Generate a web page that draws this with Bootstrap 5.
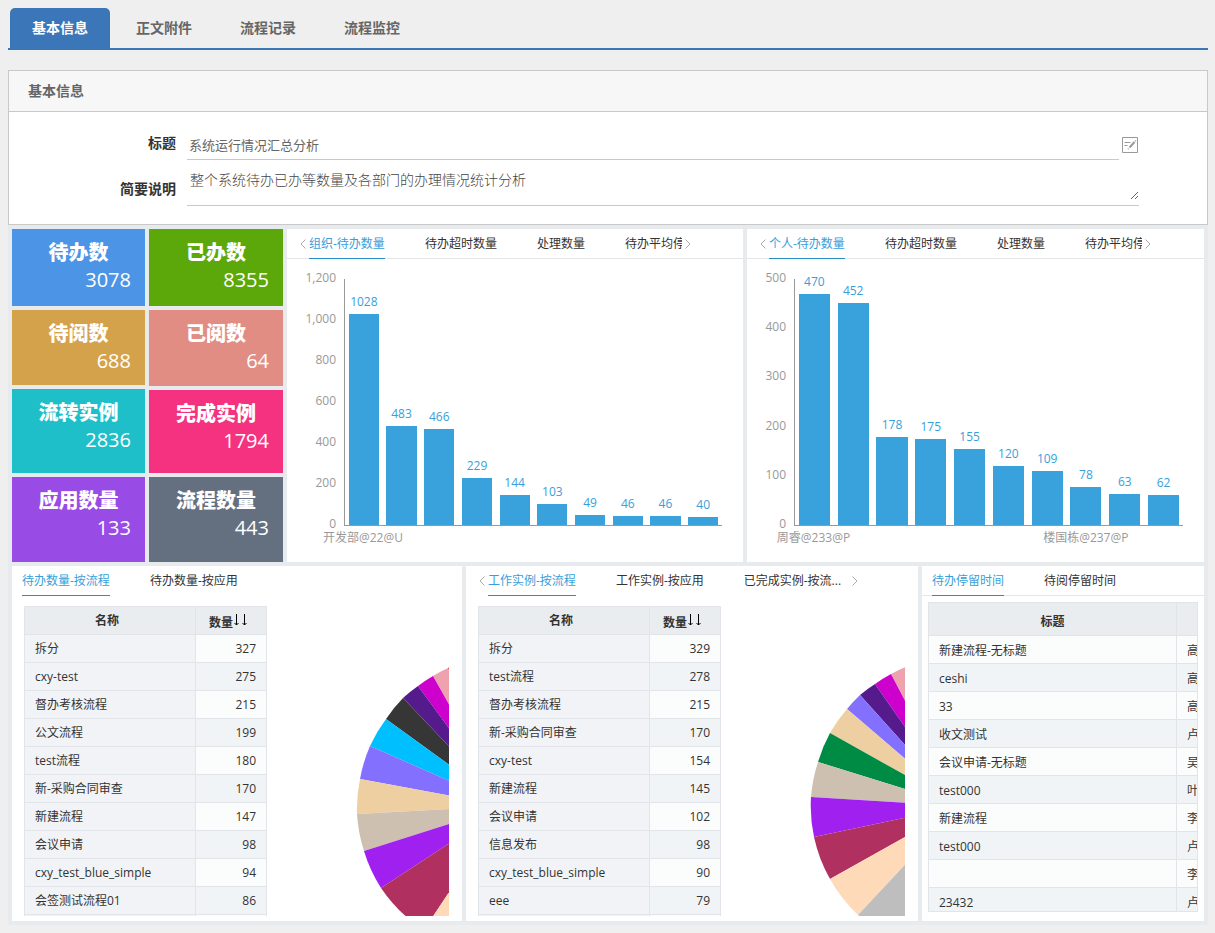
<!DOCTYPE html>
<html lang="zh-CN">
<head>
<meta charset="utf-8">
<meta name="viewport" content="width=device-width, initial-scale=1">
<title>系统运行情况汇总分析</title>
<link rel="stylesheet" href="https://cdn.jsdelivr.net/npm/bootstrap@5.3.0/dist/css/bootstrap.min.css">
<script src="https://cdn.jsdelivr.net/npm/bootstrap@5.3.0/dist/js/bootstrap.bundle.min.js"></script>
<style>
body { background: #efefef; padding: 8px 7px 8px 8px; font: 12px/16px "Open Sans", "Noto Sans CJK SC", sans-serif; color: #333; }
button { font: inherit; }
.nav-link { background: none; border: 0; }

/* page tabs */
.page-tabs { border-bottom: 2px solid #3b76b8; padding-left: 2px; gap: 4px; margin-bottom: 20px; }
.page-tabs .nav-link { width: 100px; height: 40px; padding: 0; border-radius: 5px 5px 0 0; font-size: 14px; font-weight: 700; color: #666; }
.page-tabs .nav-link.active { background: #3b76b8; color: #fff; }

/* form */
.info-card { border: 1px solid #c9c9c9; border-radius: 0; }
.info-card .card-header { height: 41px; padding: 0 19px; border-color: #c9c9c9; border-radius: 0; background: #f7f7f7; color: #666; font-size: 14px; line-height: 40px; font-weight: 700; }
.info-card .card-body { padding: 18px 68px 18px 0; display: grid; row-gap: 8px; }
.form-line { display: flex; gap: 11px; align-items: center; }
.form-line label { width: 167px; text-align: right; font-size: 14px; font-weight: 700; }
.form-line input, .form-line textarea { border-radius: 0; border: 0; background: transparent; color: #666; box-shadow: none; }
.form-line input { height: 30px; min-height: 0; padding: 0 2px 1px; font-size: 13px; border-bottom: 1px solid #c9c9c9; }
.form-line textarea { height: 32px; min-height: 0; padding: 3px; font-size: 14px; line-height: 18px; resize: vertical; font-weight: 300; color: #444; overflow: hidden; }
.area-box { border-bottom: 1px solid #c9c9c9; padding-bottom: 5px; }
.edit-btn { border: 0; background: none; padding: 0; width: 16px; height: 16px; line-height: 0; margin: 0 1px 0 3px; }

/* dashboard */
.board { background: #e7ebee; padding: 4px; display: grid; gap: 4px; }
.board-top { display: grid; gap: 4px; grid-template-columns: 133fr 134fr 456fr 457fr; min-height: 333px; }
.board-bottom { display: grid; gap: 4px; grid-template-columns: 450fr 452fr 282fr; }
.tile-col { display: grid; gap: 4px; }
.tile-a { grid-template-rows: 77fr 75fr 84fr 85fr; }
.tile-b { grid-template-rows: 77fr 76fr 83fr 85fr; }
.tile { padding: 10px 14px 0; color: #fff; font-size: 20px; line-height: 27px; }
.tile b { display: block; text-align: center; font-weight: 900; }
.tile span { display: block; text-align: right; }
.panel { background: #fff; min-width: 0; }

.panel-tabs { height: 30px; display: flex; align-items: stretch; padding-left: 10px; border-bottom: 1px solid transparent; }
.panel-tabs.lined { border-color: #e4e6ea; }
.panel-tabs .strip { display: flex; flex-wrap: nowrap; gap: 40px; min-width: 0; height: 30px; overflow: hidden; }
.panel-tabs .strip.cut { width: 373px; }
.panel-tabs .nav-link { flex: none; padding: 0; color: #333; line-height: 30px; border-bottom: 1px solid transparent; border-radius: 0; white-space: nowrap; display: flex; align-items: center; }
.panel-tabs .nav-link.active { color: #37a0da; border-color: #2590c4; }
.arrow { border: 0; background: none; padding: 0; width: 12px; display: flex; align-items: center; }
.arrow svg { display: block; margin: auto; }

/* bar charts */
.chart { display: grid; padding: 11px 21px 0 0; column-gap: 8px; color: #999; }
.chart-org { grid-template-columns: 49px 1fr; }
.chart-user { grid-template-columns: 39px 1fr; }
.y-axis { display: flex; flex-direction: column; justify-content: space-between; text-align: right; height: 262px; }
.plot { margin-top: 9px; height: 247px; border: solid #999; border-width: 0 0 1px 1px; display: flex; align-items: flex-end; }
.bar-col { flex: 1 1 0; min-width: 0; height: 100%; display: flex; flex-direction: column; justify-content: flex-end; align-items: center; color: #37a0da; }
.bar-col i { display: block; flex: none; width: 80%; margin-top: 4px; background: #39a1db; height: calc(var(--v) / var(--max) * 100%); }
.x-axis { grid-column: 2; display: flex; }
.x-axis span { flex: 1 1 0; min-width: 0; display: flex; justify-content: center; white-space: nowrap; line-height: 12px; }

/* tables */
.split { display: flex; margin: 10px 13px 5px 12px; height: 310px; overflow: hidden; }
.pie { flex: 1 1 0; min-width: 0; overflow: hidden; }
.pie svg { display: block; }
.grid-table { border-collapse: collapse; table-layout: fixed; flex: none; }
.grid-table th, .grid-table td { border: 1px solid #e1e4e8; height: 28px; padding: 0 10px; line-height: 16px; white-space: nowrap; }
.grid-table th { background: #e9edf0; text-align: center; font-weight: 600; }
.grid-table tbody tr { background: #fbfdfc; }
.grid-table tbody tr:nth-child(even) { background: #f1f4f6; }
.count-table { width: 243px; }
.count-table th { padding: 0 14px 0 8px; }
.count-table th:last-child { padding: 3px 14px 0 8px; }
.count-table th svg { vertical-align: baseline; }
.count-table td:first-child { background: #f2f3f6; }
.count-table td:last-child { text-align: right; }
.stay-box { margin: 6px 6px 9px; height: 310px; overflow: hidden; border: solid #e1e4e8; border-width: 0 1px 1px 0; }
.stay-table { width: 400px; }
.stay-table th { height: 33px; padding-top: 5px; }
.stay-table td { padding-top: 2px; }
</style>
</head>
<body>
<nav class="nav page-tabs">
  <button class="nav-link active" type="button">基本信息</button>
  <button class="nav-link" type="button">正文附件</button>
  <button class="nav-link" type="button">流程记录</button>
  <button class="nav-link" type="button">流程监控</button>
</nav>

<section class="card info-card">
  <div class="card-header">基本信息</div>
  <form class="card-body">
    <div class="form-line">
      <label class="pb-1" for="title">标题</label>
      <div class="d-flex align-items-center flex-grow-1">
        <input class="form-control" id="title" type="text" value="系统运行情况汇总分析">
        <button class="edit-btn" type="button" aria-label="编辑">
          <svg width="16" height="16" viewBox="0 0 16 16" fill="none" stroke="#999"><path d="M.5.5h15v15H.5z"/><path d="M2.500 5.500h6M2.500 8.500h3"/><path d="M12.500 5 7.500 10.500" stroke-width="2"/><path d="M13.800 3.500l-.6.700M6.500 11.500l-.600.600" stroke-width="1.500"/></svg>
        </button>
      </div>
    </div>
    <div class="form-line">
      <label class="pt-1" for="summary">简要说明</label>
      <div class="area-box flex-grow-1 d-flex"><textarea class="form-control" id="summary">整个系统待办已办等数量及各部门的办理情况统计分析</textarea></div>
    </div>
  </form>
</section>

<main class="board">
  <div class="board-top">
    <div class="tile-col tile-a">
      <div class="tile" style="background:#4c94e6"><b>待办数</b><span>3078</span></div>
      <div class="tile" style="background:#d5a24c"><b>待阅数</b><span>688</span></div>
      <div class="tile" style="background:#1ebfc8"><b>流转实例</b><span>2836</span></div>
      <div class="tile" style="background:#994be6"><b>应用数量</b><span>133</span></div>
    </div>
    <div class="tile-col tile-b">
      <div class="tile" style="background:#5ca80a"><b>已办数</b><span>8355</span></div>
      <div class="tile" style="background:#e18d84"><b>已阅数</b><span>64</span></div>
      <div class="tile" style="background:#f5327f"><b>完成实例</b><span>1794</span></div>
      <div class="tile" style="background:#64707f"><b>流程数量</b><span>443</span></div>
    </div>

    <section class="panel">
      <div class="panel-tabs lined">
        <button class="arrow" type="button" aria-label="上一个"><svg width="6" height="10" viewBox="0 0 6 10" fill="none" stroke="#aaa"><path d="M5.500.5 1 5l4.500 4.500"/></svg></button>
        <nav class="strip cut">
          <button class="nav-link active" type="button">组织-待办数量</button>
          <button class="nav-link" type="button">待办超时数量</button>
          <button class="nav-link" type="button">处理数量</button>
          <button class="nav-link" type="button">待办平均停留</button>
        </nav>
        <button class="arrow" type="button" aria-label="下一个"><svg width="6" height="10" viewBox="0 0 6 10" fill="none" stroke="#aaa"><path d="M.5.5 5 5 .5 9.500"/></svg></button>
      </div>
      <div class="chart chart-org">
        <div class="y-axis"><span>1,200</span><span>1,000</span><span>800</span><span>600</span><span>400</span><span>200</span><span>0</span></div>
        <div class="plot" style="--max:1200">
          <div class="bar-col"><span>1028</span><i style="--v:1028"></i></div>
          <div class="bar-col"><span>483</span><i style="--v:483"></i></div>
          <div class="bar-col"><span>466</span><i style="--v:466"></i></div>
          <div class="bar-col"><span>229</span><i style="--v:229"></i></div>
          <div class="bar-col"><span>144</span><i style="--v:144"></i></div>
          <div class="bar-col"><span>103</span><i style="--v:103"></i></div>
          <div class="bar-col"><span>49</span><i style="--v:49"></i></div>
          <div class="bar-col"><span>46</span><i style="--v:46"></i></div>
          <div class="bar-col"><span>46</span><i style="--v:46"></i></div>
          <div class="bar-col"><span>40</span><i style="--v:40"></i></div>
        </div>
        <div class="x-axis"><span>开发部@22@U</span><span></span><span></span><span></span><span></span><span></span><span></span><span></span><span></span><span></span></div>
      </div>
    </section>

    <section class="panel">
      <div class="panel-tabs lined">
        <button class="arrow" type="button" aria-label="上一个"><svg width="6" height="10" viewBox="0 0 6 10" fill="none" stroke="#aaa"><path d="M5.500.5 1 5l4.500 4.500"/></svg></button>
        <nav class="strip cut">
          <button class="nav-link active" type="button">个人-待办数量</button>
          <button class="nav-link" type="button">待办超时数量</button>
          <button class="nav-link" type="button">处理数量</button>
          <button class="nav-link" type="button">待办平均停留</button>
        </nav>
        <button class="arrow" type="button" aria-label="下一个"><svg width="6" height="10" viewBox="0 0 6 10" fill="none" stroke="#aaa"><path d="M.5.5 5 5 .5 9.500"/></svg></button>
      </div>
      <div class="chart chart-user">
        <div class="y-axis"><span>500</span><span>400</span><span>300</span><span>200</span><span>100</span><span>0</span></div>
        <div class="plot" style="--max:500">
          <div class="bar-col"><span>470</span><i style="--v:470"></i></div>
          <div class="bar-col"><span>452</span><i style="--v:452"></i></div>
          <div class="bar-col"><span>178</span><i style="--v:178"></i></div>
          <div class="bar-col"><span>175</span><i style="--v:175"></i></div>
          <div class="bar-col"><span>155</span><i style="--v:155"></i></div>
          <div class="bar-col"><span>120</span><i style="--v:120"></i></div>
          <div class="bar-col"><span>109</span><i style="--v:109"></i></div>
          <div class="bar-col"><span>78</span><i style="--v:78"></i></div>
          <div class="bar-col"><span>63</span><i style="--v:63"></i></div>
          <div class="bar-col"><span>62</span><i style="--v:62"></i></div>
        </div>
        <div class="x-axis"><span>周睿@233@P</span><span></span><span></span><span></span><span></span><span></span><span></span><span>楼国栋@237@P</span><span></span><span></span></div>
      </div>
    </section>
  </div>

  <div class="board-bottom">
    <section class="panel">
      <div class="panel-tabs">
        <nav class="strip">
          <button class="nav-link active" type="button">待办数量-按流程</button>
          <button class="nav-link" type="button">待办数量-按应用</button>
        </nav>
      </div>
      <div class="split">
        <table class="grid-table count-table">
          <colgroup><col><col width="71"></colgroup>
          <thead><tr><th>名称</th><th>数量<svg width="14" height="13" viewBox="0 0 14 13" fill="none" stroke="#000"><path d="M3.500 0v11M1.500 9l2 2 2-2M11.500 0v11M9.500 9l2 2 2-2"/></svg></th></tr></thead>
          <tbody>
            <tr><td>拆分</td><td>327</td></tr>
            <tr><td>cxy-test</td><td>275</td></tr>
            <tr><td>督办考核流程</td><td>215</td></tr>
            <tr><td>公文流程</td><td>199</td></tr>
            <tr><td>test流程</td><td>180</td></tr>
            <tr><td>新-采购合同审查</td><td>170</td></tr>
            <tr><td>新建流程</td><td>147</td></tr>
            <tr><td>会议申请</td><td>98</td></tr>
            <tr><td>cxy_test_blue_simple</td><td>94</td></tr>
            <tr><td>会签测试流程01</td><td>86</td></tr>
            <tr><td></td><td></td></tr>
          </tbody>
        </table>
        <div class="pie">
          <svg width="400" height="310" viewBox="-239 -200 400 310">
            <path fill="#ff0000" d="M0 0 0-149A149 149 0 0 0-58-138z"/>
            <path fill="#eea2ad" d="M0 0-58-138A149 149 0 0 0-73-130z"/>
            <path fill="#cd00cd" d="M0 0-73-130A149 149 0 0 0-88-120z"/>
            <path fill="#551a8b" d="M0 0-88-120A149 149 0 0 0-103-108z"/>
            <path fill="#363636" d="M0 0-103-108A149 149 0 0 0-120-87z"/>
            <path fill="#00bfff" d="M0 0-120-87A149 149 0 0 0-136-60z"/>
            <path fill="#8470ff" d="M0 0-136-60A149 149 0 0 0-146-27z"/>
            <path fill="#eecfa1" d="M0 0-146-27A149 149 0 0 0-149 8z"/>
            <path fill="#cdc0b0" d="M0 0-149 8A149 149 0 0 0-142 45z"/>
            <path fill="#a020f0" d="M0 0-142 45A149 149 0 0 0-125 82z"/>
            <path fill="#b03060" d="M0 0-125 82A149 149 0 0 0-82 124z"/>
            <path fill="#ffdab9" d="M0 0-82 124A149 149 0 0 0 0 149z"/>
          </svg>
        </div>
      </div>
    </section>

    <section class="panel">
      <div class="panel-tabs">
        <button class="arrow" type="button" aria-label="上一个"><svg width="6" height="10" viewBox="0 0 6 10" fill="none" stroke="#aaa"><path d="M5.500.5 1 5l4.500 4.500"/></svg></button>
        <nav class="strip">
          <button class="nav-link active" type="button">工作实例-按流程</button>
          <button class="nav-link" type="button">工作实例-按应用</button>
          <button class="nav-link" type="button">已完成实例-按流...</button>
        </nav>
        <button class="arrow ms-2" type="button" aria-label="下一个"><svg width="6" height="10" viewBox="0 0 6 10" fill="none" stroke="#aaa"><path d="M.5.5 5 5 .5 9.500"/></svg></button>
      </div>
      <div class="split">
        <table class="grid-table count-table">
          <colgroup><col><col width="71"></colgroup>
          <thead><tr><th>名称</th><th>数量<svg width="14" height="13" viewBox="0 0 14 13" fill="none" stroke="#000"><path d="M3.500 0v11M1.500 9l2 2 2-2M11.500 0v11M9.500 9l2 2 2-2"/></svg></th></tr></thead>
          <tbody>
            <tr><td>拆分</td><td>329</td></tr>
            <tr><td>test流程</td><td>278</td></tr>
            <tr><td>督办考核流程</td><td>215</td></tr>
            <tr><td>新-采购合同审查</td><td>170</td></tr>
            <tr><td>cxy-test</td><td>154</td></tr>
            <tr><td>新建流程</td><td>145</td></tr>
            <tr><td>会议申请</td><td>102</td></tr>
            <tr><td>信息发布</td><td>98</td></tr>
            <tr><td>cxy_test_blue_simple</td><td>90</td></tr>
            <tr><td>eee</td><td>79</td></tr>
            <tr><td></td><td></td></tr>
          </tbody>
        </table>
        <div class="pie">
          <svg width="400" height="310" viewBox="-239 -200 400 310">
            <path fill="#eea2ad" d="M0 0-40-144A149 149 0 0 0-69-132z"/>
            <path fill="#cd00cd" d="M0 0-69-132A149 149 0 0 0-85-122z"/>
            <path fill="#551a8b" d="M0 0-85-122A149 149 0 0 0-100-111z"/>
            <path fill="#8470ff" d="M0 0-100-111A149 149 0 0 0-113-97z"/>
            <path fill="#eecfa1" d="M0 0-113-97A149 149 0 0 0-130-73z"/>
            <path fill="#008b45" d="M0 0-130-73A149 149 0 0 0-142-44z"/>
            <path fill="#cdc0b0" d="M0 0-142-44A149 149 0 0 0-149-9z"/>
            <path fill="#a020f0" d="M0 0-149-9A149 149 0 0 0-146 31z"/>
            <path fill="#b03060" d="M0 0-146 31A149 149 0 0 0-130 73z"/>
            <path fill="#ffdab9" d="M0 0-130 73A149 149 0 0 0-102 109z"/>
            <path fill="#bebebe" d="M0 0-102 109A149 149 0 0 0 0 149z"/>
          </svg>
        </div>
      </div>
    </section>

    <section class="panel">
      <div class="panel-tabs lined">
        <nav class="strip">
          <button class="nav-link active" type="button">待办停留时间</button>
          <button class="nav-link" type="button">待阅停留时间</button>
        </nav>
      </div>
      <div class="stay-box">
        <table class="grid-table stay-table">
          <colgroup><col width="248"><col></colgroup>
          <thead><tr><th>标题</th><th></th></tr></thead>
          <tbody>
            <tr><td>新建流程-无标题</td><td>高</td></tr>
            <tr><td>ceshi</td><td>高</td></tr>
            <tr><td>33</td><td>高</td></tr>
            <tr><td>收文测试</td><td>卢</td></tr>
            <tr><td>会议申请-无标题</td><td>吴</td></tr>
            <tr><td>test000</td><td>叶</td></tr>
            <tr><td>新建流程</td><td>李</td></tr>
            <tr><td>test000</td><td>卢</td></tr>
            <tr><td></td><td>李</td></tr>
            <tr><td>23432</td><td>卢</td></tr>
          </tbody>
        </table>
      </div>
    </section>
  </div>
</main>
</body>
</html>
